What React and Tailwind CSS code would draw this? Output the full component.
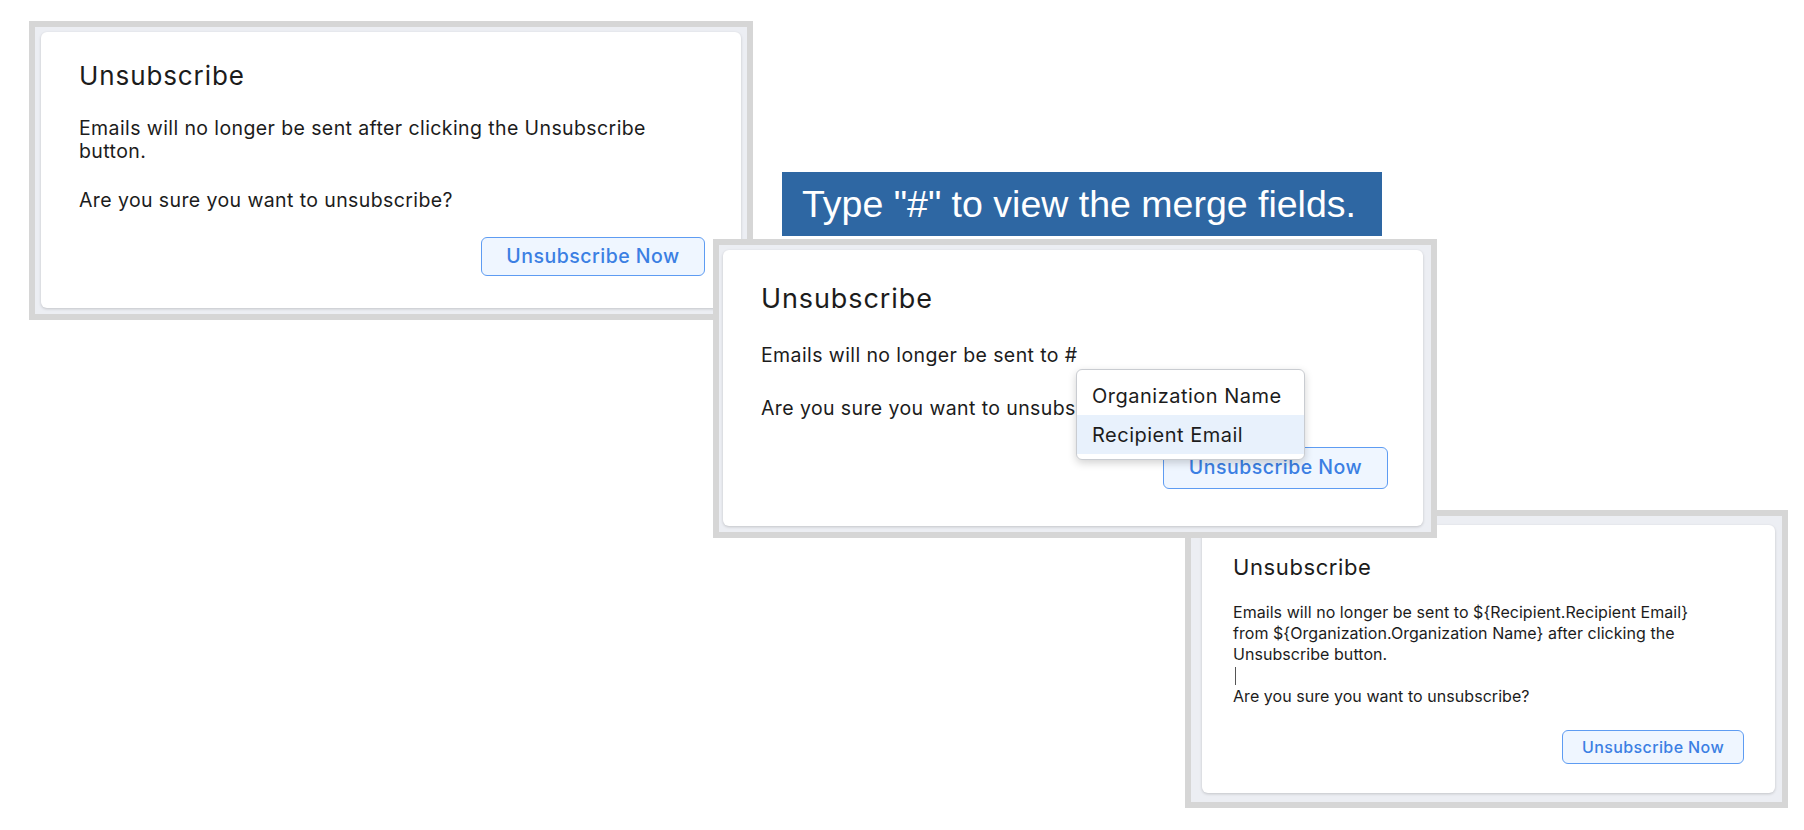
import React from 'react';

const font = { fontFamily: 'Inter, "Noto Sans", sans-serif' };

const Frame = ({ className, pad, children }) => (
  <div className={`absolute bg-[#d6d6d6] p-[6px] ${className}`}>
    <div className={`h-full w-full bg-[#eceef3] ${pad}`}>
      <div className="relative flex h-full w-full flex-col rounded-md bg-white shadow-[0_1px_3px_rgba(0,0,0,0.18)]">
        {children}
      </div>
    </div>
  </div>
);

const NowButton = ({ className }) => (
  <button
    className={`rounded-md border border-[#5e9cf2] bg-[#eff6ff] font-medium text-[#3b7fe3] ${className}`}
  >
    Unsubscribe Now
  </button>
);

export default function App() {
  return (
    <div className="relative h-[830px] w-[1804px] overflow-hidden bg-white text-[#1c1c1c]" style={font}>
      {/* first state */}
      <Frame className="left-[29px] top-[21px] h-[299px] w-[724px]" pad="pt-[5px] pl-[6px] pr-[6px] pb-[6px]">
        <div className="flex flex-1 flex-col px-[38px] pt-[28px]">
          <h2 className="text-[26px] leading-[32px] tracking-[0.9px]">Unsubscribe</h2>
          <p className="mt-[25px] w-[600px] text-[19.5px] leading-[23px] tracking-[0.4px]">
            Emails will no longer be sent after clicking the Unsubscribe button.
          </p>
          <p className="mt-[26px] text-[19.5px] leading-[23px] tracking-[0.4px]">Are you sure you want to unsubscribe?</p>
        </div>
        <div className="flex justify-end pb-[32px] pr-[36px]">
          <NowButton className="h-[39px] w-[224px] text-[19.5px] tracking-[0.5px]" />
        </div>
      </Frame>

      {/* hint banner */}
      <div className="absolute left-[782px] top-[172px] flex h-[64px] w-[600px] items-center bg-[#2e67a3] pl-[20px] text-[37.5px] text-white" style={{ fontFamily: '"Liberation Sans", Arial, sans-serif' }}>
        Type "#" to view the merge fields.
      </div>

      {/* third state */}
      <Frame className="left-[1185px] top-[510px] h-[298px] w-[603px]" pad="pt-[9px] pl-[11px] pr-[7px] pb-[9px]">
        <div className="flex flex-1 flex-col pl-[31px] pr-[20px] pt-[28px]">
          <h2 className="text-[22px] leading-[28px] tracking-[0.6px]">Unsubscribe</h2>
          <div className="mt-[21px] text-[16px] leading-[21px] tracking-[0.05px]">
            <p>Emails will no longer be sent to ${'{'}Recipient.Recipient Email{'}'}</p>
            <p>from ${'{'}Organization.Organization Name{'}'} after clicking the</p>
            <p>Unsubscribe button.</p>
            <p className="flex h-[21px] items-center pl-[2px]">
              <span className="h-[18px] w-px bg-[#555]" />
            </p>
            <p>Are you sure you want to unsubscribe?</p>
          </div>
        </div>
        <div className="flex justify-end pb-[29px] pr-[31px]">
          <NowButton className="h-[34px] w-[182px] text-[16px] tracking-[0.4px]" />
        </div>
      </Frame>

      {/* second state with merge field menu */}
      <Frame className="left-[713px] top-[239px] h-[299px] w-[724px]" pad="pt-[5px] pl-[4px] pr-[8px] pb-[6px]">
        <div className="flex flex-1 flex-col px-[38px] pt-[32px]">
          <h2 className="text-[27px] leading-[34px] tracking-[0.9px]">Unsubscribe</h2>
          <p className="mt-[28px] text-[19.5px] leading-[23px] tracking-[0.4px]">Emails will no longer be sent to #</p>
          <p className="mt-[30px] text-[19.5px] leading-[23px] tracking-[0.4px]">Are you sure you want to unsubscribe?</p>
        </div>
        <div className="flex justify-end pb-[37px] pr-[35px]">
          <NowButton className="h-[42px] w-[225px] text-[19.5px] tracking-[0.5px]" />
        </div>

        <div className="absolute left-[353px] top-[119px] w-[229px] rounded-md border border-[#c9ccd1] bg-white pb-[5px] pt-[6px] shadow-[0_3px_8px_rgba(0,0,0,0.18)]">
          <div className="flex h-[39px] items-center pl-[15px] text-[20px] tracking-[0.5px]">Organization Name</div>
          <div className="flex h-[39px] items-center bg-[#e8f1fc] pl-[15px] text-[20px] tracking-[0.5px]">Recipient Email</div>
        </div>
      </Frame>
    </div>
  );
}
